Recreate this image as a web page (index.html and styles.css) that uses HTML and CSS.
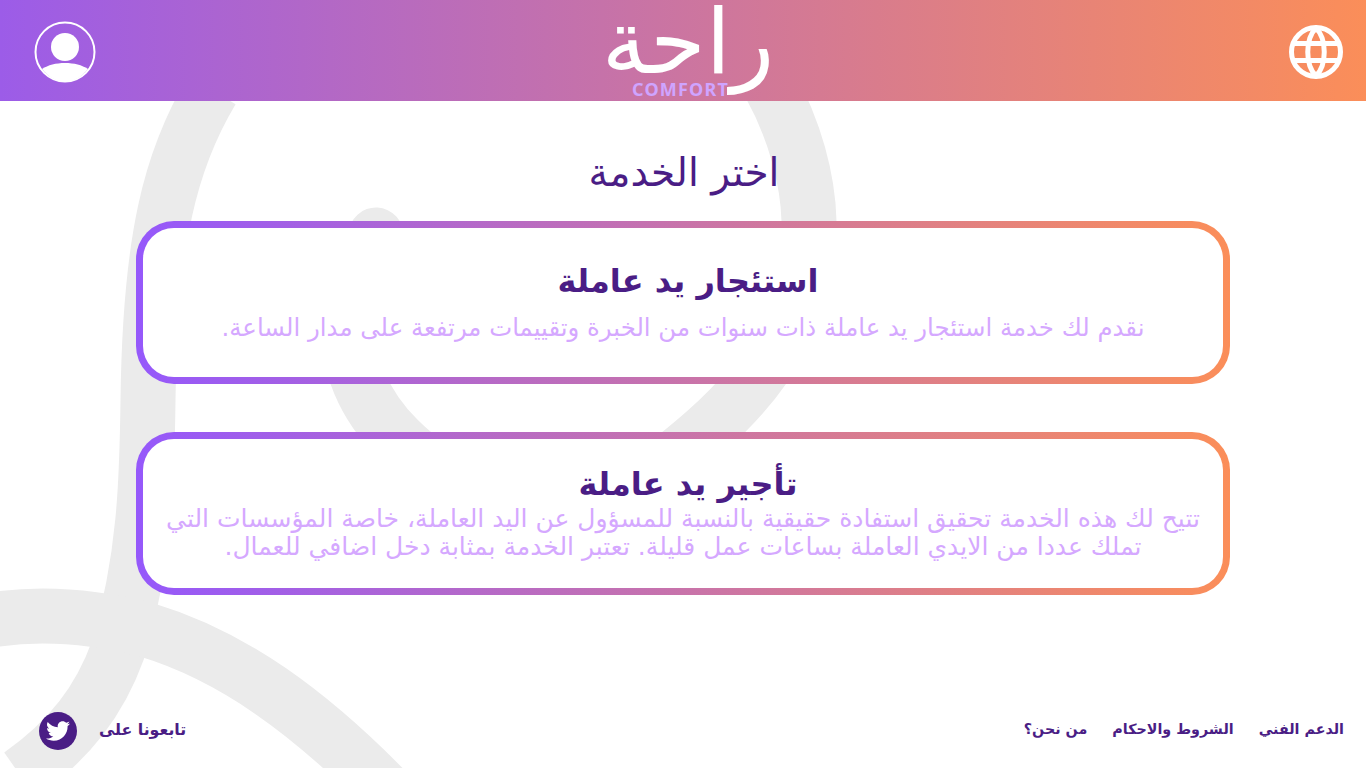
FILE: index.html
```html
<!DOCTYPE html>
<html lang="ar" dir="rtl">
<head>
    <meta charset="UTF-8">
    <title>راحة</title>
    <link rel="stylesheet" href="styles.css">
</head>
<body>
    <svg class="bg-art" viewBox="0 0 1366 768" aria-hidden="true">
        <path class="butt" d="M212 90C170 160 150 240 148 400C147 480 145 560 118 650C100 700 70 740 20 775" />
        <path class="butt" d="M-20 622C40 610 100 618 147 630C230 655 310 710 400 805" />
        <path d="M376 235C350 290 340 340 360 384C375 420 410 460 470 490C600 520 650 480 705 432C770 375 810 310 809 221C808 180 795 130 770 85" />
    </svg>
    <header class="topbar">
        <svg class="globe" viewBox="0 0 54 54">
            <circle cx="27" cy="27" r="24.500" />
            <path d="M27 3C38 14 38 40 27 51C16 40 16 14 27 3Z" />
            <path d="M4 18.500H50M4 35.500H50" />
        </svg>
        <div class="logo">
            <span class="logo-ar">راحة</span>
            <span class="logo-en">COMFORT</span>
        </div>
        <svg class="avatar" viewBox="0 0 62 62">
            <circle class="ring" cx="31" cy="31" r="29.500" />
            <circle cx="31" cy="26" r="14" />
            <path d="M8 48C14 44 22 42 31 42C40 42 48 44 54 48C48 56 40 60.500 31 60.500C22 60.500 14 56 8 48Z" />
        </svg>
    </header>
    <main class="content">
        <h2 class="page-title">اختر الخدمة</h2>
        <section class="service">
            <div class="service-inner first">
                <h3>استئجار يد عاملة</h3>
                <p>نقدم لك خدمة استئجار يد عاملة ذات سنوات من الخبرة وتقييمات مرتفعة على مدار الساعة.</p>
            </div>
        </section>
        <section class="service">
            <div class="service-inner">
                <h3>تأجير يد عاملة</h3>
                <p>تتيح لك هذه الخدمة تحقيق استفادة حقيقية بالنسبة للمسؤول عن اليد العاملة، خاصة المؤسسات التي تملك عددا من الايدي العاملة بساعات عمل قليلة. تعتبر الخدمة بمثابة دخل اضافي للعمال.</p>
            </div>
        </section>
    </main>
    <footer class="footer">
        <nav class="links">
            <a>الدعم الفني</a>
            <a>الشروط والاحكام</a>
            <a>من نحن؟</a>
        </nav>
        <div class="follow">
            <span>تابعونا على</span>
            <svg class="twitter" viewBox="0 0 38 38">
                <circle cx="19" cy="19" r="19" />
                <path d="M31 11.500C30.100 11.900 29.200 12.200 28.200 12.300C29.200 11.700 30 10.700 30.400 9.600C29.400 10.200 28.400 10.600 27.200 10.800C26.300 9.800 25 9.200 23.600 9.200C20.900 9.200 18.700 11.400 18.700 14.100C18.700 14.500 18.700 14.900 18.800 15.200C14.700 15 11.100 13 8.700 10C8.300 10.700 8 11.600 8 12.500C8 14.200 8.900 15.700 10.200 16.600C9.400 16.600 8.600 16.300 8 16V16.100C8 18.500 9.700 20.500 11.900 20.900C11.500 21 11.100 21.100 10.600 21.100C10.300 21.100 10 21.100 9.700 21C10.300 23 12.200 24.400 14.300 24.500C12.600 25.800 10.500 26.600 8.200 26.600C7.800 26.600 7.400 26.600 7 26.500C9.200 27.900 11.800 28.700 14.600 28.700C23.600 28.700 28.600 21.200 28.600 14.700V14.100C29.600 13.400 30.400 12.500 31 11.500Z" />
            </svg>
        </div>
    </footer>
</body>
</html>
```

FILE: styles.css
```css
html, body {
    height: 100%;
}
body {
    margin: 0;
    height: 768px;
    overflow: hidden;
    position: relative;
    display: flex;
    flex-direction: column;
    background-color: #ffffff;
    color: #4a1d85;
    font-family: 'DejaVu Sans', sans-serif;
}
.bg-art {
    position: absolute;
    left: 0;
    top: 0;
    width: 1366px;
    height: 768px;
    fill: none;
    stroke: #ebebeb;
    stroke-width: 55;
    stroke-linecap: round;
}
.bg-art .butt {
    stroke-linecap: butt;
}
.topbar {
    position: relative;
    height: 101px;
    box-sizing: border-box;
    padding: 3px 23px 0 34px;
    flex: none;
    display: flex;
    align-items: center;
    justify-content: space-between;
    background: linear-gradient(to left, #fb8e59, #9c5ce8);
}
.globe {
    width: 54px;
    height: 54px;
    fill: none;
    stroke: #ffffff;
    stroke-width: 5;
}
.avatar {
    width: 62px;
    height: 62px;
    fill: #ffffff;
}
.avatar .ring {
    fill: none;
    stroke: #ffffff;
    stroke-width: 2;
}
.logo {
    position: absolute;
    left: 597px;
    top: 0;
    width: 182px;
    height: 101px;
    text-align: center;
}
.logo-ar {
    display: block;
    font-size: 90px;
    line-height: 84px;
    color: #ffffff;
}
.logo-en {
    position: absolute;
    left: 35px;
    top: 79px;
    font-size: 18px;
    line-height: 20px;
    font-weight: 700;
    letter-spacing: 1.200px;
    color: #cfa4ff;
    font-family: 'Noto Sans', sans-serif;
}
.content {
    position: relative;
    flex: 1;
    display: flex;
    flex-direction: column;
    align-items: center;
}
.page-title {
    margin: 47px 0 23px;
    padding-left: 2px;
    font-size: 39px;
    line-height: 50px;
    font-weight: 400;
}
.service {
    width: 1094px;
    height: 163px;
    box-sizing: border-box;
    padding: 7px;
    margin-bottom: 48px;
    border-radius: 38px;
    background: linear-gradient(to left, #fb8e59, #9558fb);
}
.service-inner {
    height: 100%;
    box-sizing: border-box;
    padding: 25px 20px 0;
    border-radius: 31px;
    background-color: #ffffff;
    text-align: center;
}
.service-inner.first {
    padding-top: 33px;
}
.service h3 {
    margin: 0;
    padding-left: 10px;
    font-size: 32px;
    line-height: 40px;
    font-weight: 700;
}
.service p {
    margin: 1px 0 0;
    font-size: 25px;
    line-height: 28px;
    color: #d5a8ff;
}
.service-inner.first p {
    margin-top: 13px;
    font-size: 24.400px;
}
.footer {
    position: relative;
    height: 76px;
    box-sizing: border-box;
    padding: 2px 22px 0 39px;
    flex: none;
    display: flex;
    align-items: center;
    justify-content: space-between;
    font-size: 14.300px;
    font-weight: 700;
}
.links {
    display: flex;
    gap: 25px;
    margin-top: -4px;
}
.follow {
    display: flex;
    align-items: center;
    gap: 22px;
    font-size: 15.800px;
}
.follow span {
    margin-top: -4px;
}
.twitter {
    width: 38px;
    height: 38px;
    fill: #4a1d85;
}
.twitter path {
    fill: #ffffff;
}
```
